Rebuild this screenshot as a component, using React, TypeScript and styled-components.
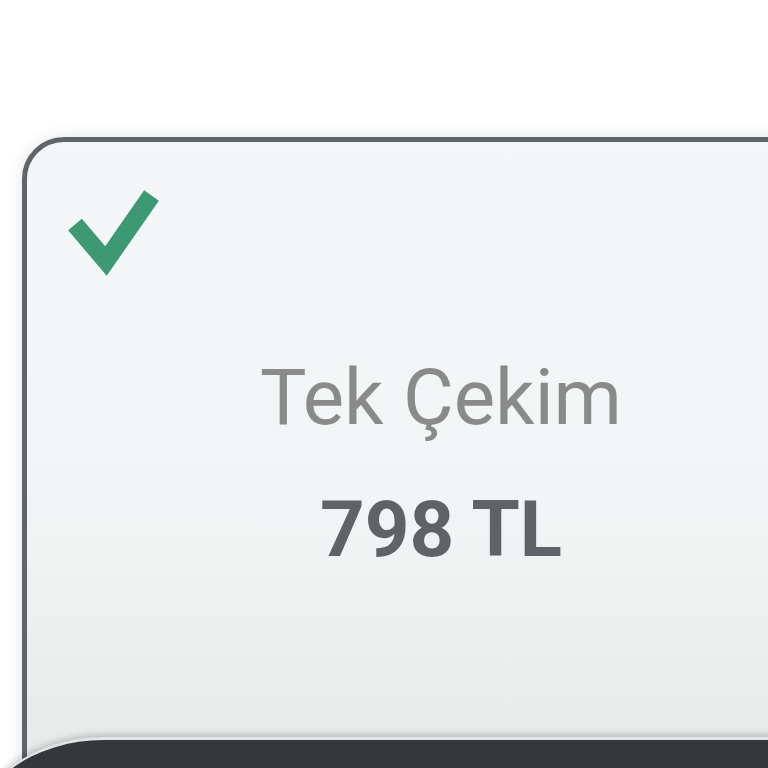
import styled, { createGlobalStyle } from "styled-components";

const GlobalStyle = createGlobalStyle`
  html, body {
    margin: 0;
    padding: 0;
    background: #ffffff;
    font-family: Roboto, "Noto Sans", sans-serif;
  }
`;

const Screen = styled.div`
  width: 768px;
  height: 768px;
  overflow: hidden;
  background: #ffffff;
  padding: 137px 0 0 22px;
  box-sizing: border-box;
  display: flex;
  flex-direction: column;
  align-items: flex-start;
`;

const Card = styled.div`
  flex: none;
  width: 838px;
  height: 700px;
  box-sizing: border-box;
  padding-top: 38px;
  border: 5px solid #5e666a;
  border-radius: 42px;
  background: linear-gradient(180deg, #f4f7f7 0%, #f2f5f5 52%, #e8ebea 86%, #e6e9e8 100%);
  box-shadow: 0 0 18px rgba(0, 0, 0, 0.1);
  display: flex;
  flex-direction: column;
  align-items: center;
`;

const CheckRow = styled.div`
  align-self: stretch;
  height: 100px;
  padding-left: 33px;
`;

const Title = styled.div`
  margin-top: 78px;
  font-size: 78px;
  line-height: 80px;
  font-weight: 400;
  color: #8a8a8a;
`;

const Price = styled.div`
  margin-top: 52px;
  font-size: 78px;
  line-height: 80px;
  font-weight: 700;
  color: #5f6367;
`;

const Sheet = styled.div`
  flex: none;
  width: 900px;
  height: 200px;
  margin: -100px 0 0 -48px;
  background: #34383b;
  border-top: 3px solid #e2e5e5;
  border-top-left-radius: 130px 100px;
  box-shadow: 0 -3px 6px rgba(0, 0, 0, 0.18);
`;

const CheckIcon = () => (
  <svg width="110" height="100" viewBox="0 0 110 100">
    <polyline
      points="15,44.5 46,81 91.5,15.5"
      fill="none"
      stroke="#3c9974"
      strokeWidth="18"
      strokeLinecap="butt"
      strokeLinejoin="miter"
    />
  </svg>
);

export default function App() {
  return (
    <>
      <GlobalStyle />
      <Screen>
        <Card>
          <CheckRow>
            <CheckIcon />
          </CheckRow>
          <Title>Tek Çekim</Title>
          <Price>798 TL</Price>
        </Card>
        <Sheet />
      </Screen>
    </>
  );
}
